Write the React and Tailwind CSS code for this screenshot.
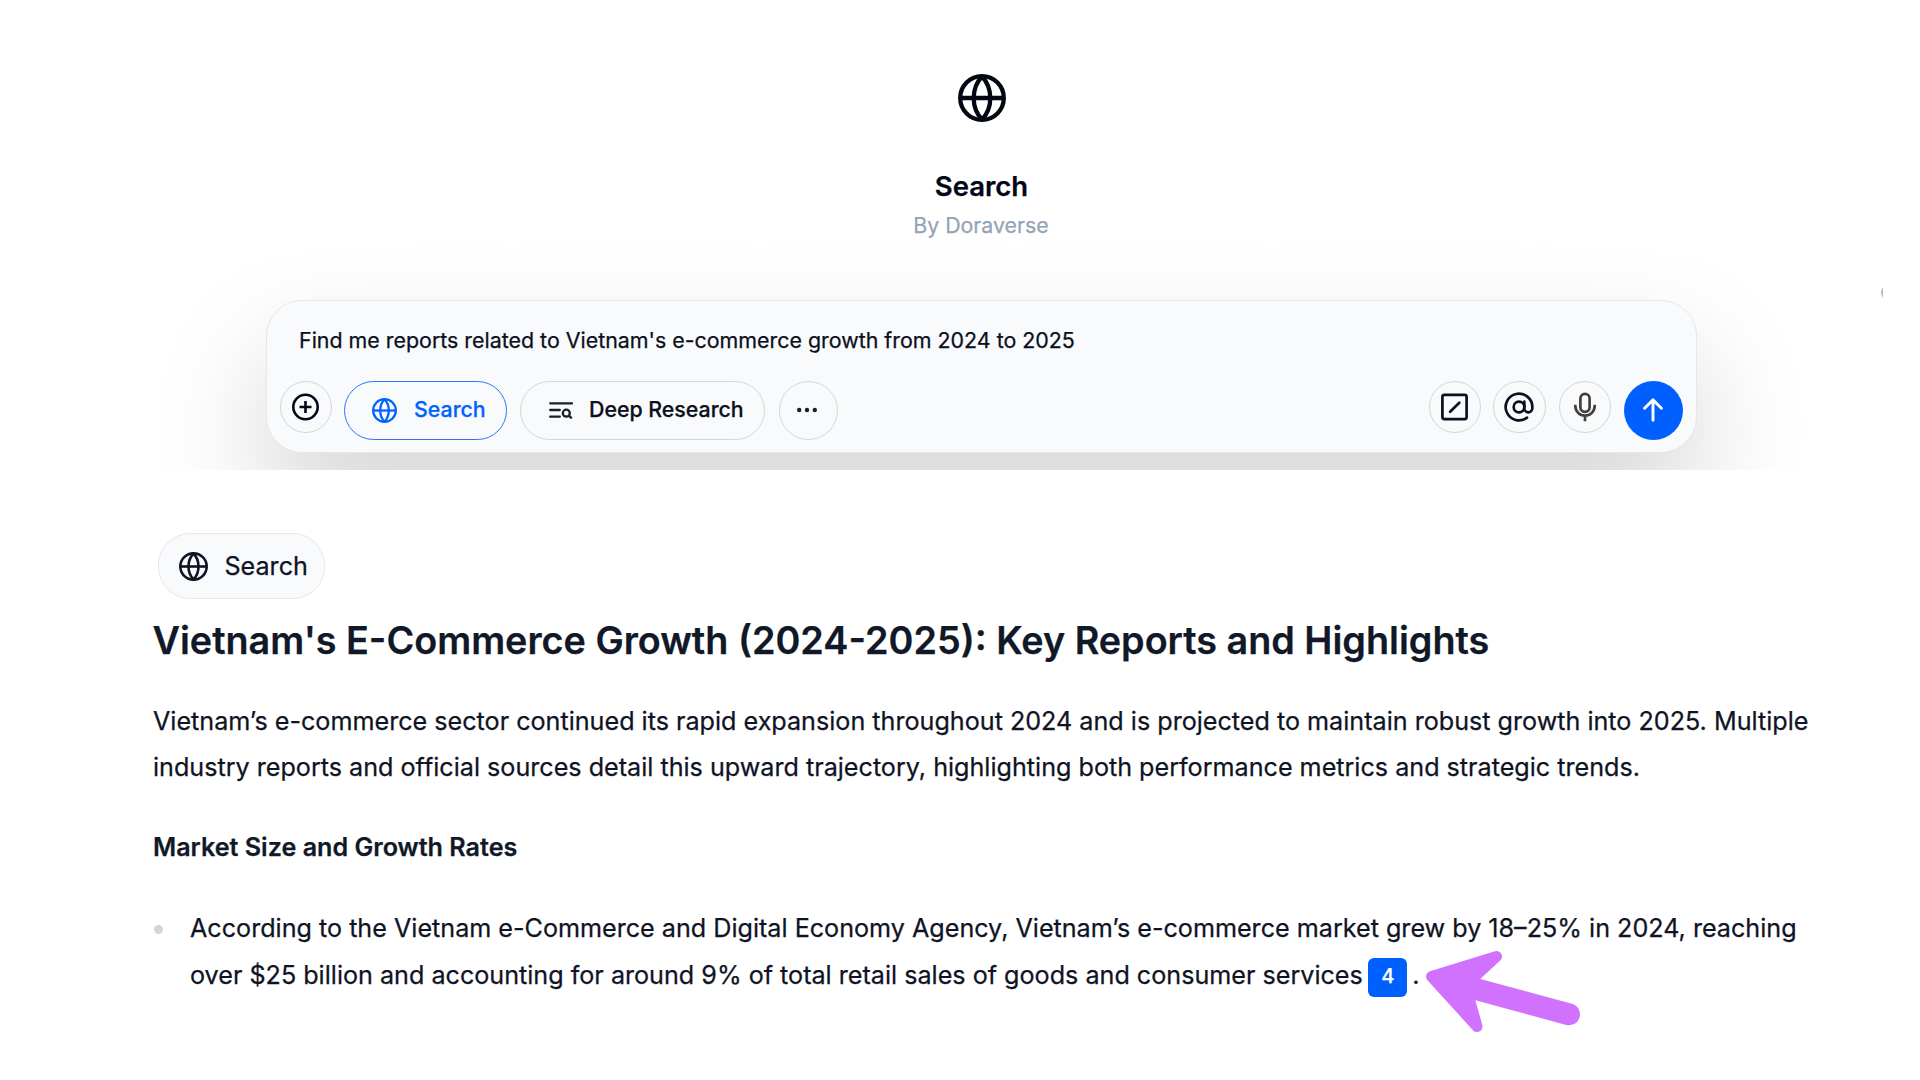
import React from "react";

function Globe({ className }) {
  return (
    <svg viewBox="0 0 48 48" className={className} fill="none" stroke="currentColor" strokeWidth="4.300" strokeLinejoin="round">
      <circle cx="24" cy="24" r="21.800" />
      <path d="M2.500 24h43" />
      <path d="M24 2.500c-5.200 5.500-8.300 13-8.300 21.500s3.100 16 8.300 21.500c5.200-5.500 8.300-13 8.300-21.500S29.200 8 24 2.500z" />
    </svg>
  );
}

function RoundButton({ children, className = "" }) {
  return (
    <button className={`flex size-[52.500px] shrink-0 items-center justify-center rounded-full border border-[#d6d6d6] ${className}`}>
      {children}
    </button>
  );
}

function PlusIcon() {
  return (
    <svg viewBox="0 0 28 28" className="size-7 text-[#020617]" fill="none" stroke="currentColor" strokeWidth="2.600">
      <circle cx="13.500" cy="14" r="12.200" />
      <path d="M13.500 8v12M7.500 14h12" />
    </svg>
  );
}

function ListSearchIcon() {
  return (
    <svg viewBox="0 0 24 18" className="h-[18px] w-6 text-[#1a1f2c]" fill="none" stroke="currentColor" strokeWidth="2.300">
      <path d="M1.200 2.300h21.800M1.200 9h9.600M1.200 15.700h9.600" strokeLinecap="round" />
      <circle cx="17.300" cy="12.200" r="3.500" />
      <path d="M19.800 14.700l3 2.700" />
    </svg>
  );
}

function DotsIcon() {
  return (
    <svg viewBox="0 0 24 8" className="-mt-px mr-[2px] h-2 w-6 text-[#1a1f2c]" fill="currentColor">
      <circle cx="4.200" cy="4" r="2.200" />
      <circle cx="12" cy="4" r="2.200" />
      <circle cx="19.800" cy="4" r="2.200" />
    </svg>
  );
}

function SlashSquareIcon() {
  return (
    <svg viewBox="0 0 28 28" className="size-7 text-[#0b1020]" fill="none" stroke="currentColor" strokeWidth="2.700" strokeLinecap="round">
      <rect x="1.400" y="1.900" width="24.200" height="24.200" rx="2" />
      <path d="M9.100 18.700l9.200-8.900" />
    </svg>
  );
}

function AtIcon() {
  return (
    <svg viewBox="0 0 24 24" className="size-8 text-[#0b1020]" fill="none" stroke="currentColor" strokeWidth="2" strokeLinecap="round" strokeLinejoin="round">
      <circle cx="12" cy="12" r="4" />
      <path d="M16 8v5a3 3 0 0 0 6 0v-1a10 10 0 1 0-4 8" />
    </svg>
  );
}

function MicIcon() {
  return (
    <svg viewBox="0 0 24 30" className="h-[30px] w-6 text-[#404040]" fill="none" stroke="currentColor" strokeWidth="2.700">
      <rect x="7.400" y="1.800" width="9.200" height="18" rx="4.600" />
      <path d="M2.300 12.800v1.200a9.700 9.700 0 0 0 19.400 0v-1.200M12 23.700v5.600" />
    </svg>
  );
}

function ArrowUpIcon() {
  return (
    <svg viewBox="0 0 22 24" className="mr-px h-6 w-[22px]" fill="none" stroke="#fff" strokeWidth="2.900" strokeLinecap="round" strokeLinejoin="round">
      <path d="M11 22.200V2M2.600 10.200L11 1.900l8.400 8.300" />
    </svg>
  );
}

function Pointer() {
  return (
    <svg viewBox="0 0 156 84" className="absolute top-[-1.700px] left-[1235px] h-[84px] w-[156px]" fill="none" stroke="#d172ff" strokeLinecap="round" strokeLinejoin="round">
      <path d="M6.500 26.500L71.500 6.500L45.800 30.300L41.800 40L52 76.500z" fill="#d172ff" strokeWidth="11" />
      <path d="M45 37.500L144 64.300" strokeWidth="22" />
    </svg>
  );
}

function Hero() {
  return (
    <section className="relative h-[470px] overflow-hidden pl-[266px]">
      <div className="flex w-[1431px] flex-col items-center pt-[74.400px]">
        <Globe className="size-12 text-[#030712]" />
        <h1 className="mt-[45.300px] text-[27.500px] leading-9 font-semibold text-[#020617]">Search</h1>
        <p className="mt-[7px] mr-px text-[21.330px] leading-7 text-[#94a3b8]">By Doraverse</p>
        <div className="mt-[61.500px] h-[153px] w-full rounded-[36px] border border-[#e5e7eb] bg-[#f9fafc] px-3 pt-[23px] shadow-[0_55px_115px_rgba(0,0,0,0.17)]">
          <p className="ml-5 text-[21.400px] leading-8 text-[#0b1020]">
            Find me reports related to Vietnam's e-commerce growth from 2024 to 2025
          </p>
          <div className="mt-[24.800px] flex items-start text-[21.330px] leading-8 font-medium">
            <RoundButton className="ml-[0.500px]">
              <PlusIcon />
            </RoundButton>
            <button className="ml-3 flex h-[59px] w-[162.500px] items-center rounded-full border-[1.500px] border-[#2b76ff] pl-[27px] text-[#0062ff]">
              <Globe className="mt-px size-[25px]" />
              <span className="-mt-[3px] ml-[17px]">Search</span>
            </button>
            <button className="ml-[13.500px] flex h-[59px] w-[245px] items-center rounded-full border border-[#d6d6d6] pl-[28px] text-[#0b1020]">
              <ListSearchIcon />
              <span className="-mt-[3px] ml-4">Deep Research</span>
            </button>
            <button className="ml-[13.500px] flex size-[59px] items-center justify-center rounded-full border border-[#d6d6d6]">
              <DotsIcon />
            </button>
            <RoundButton className="ml-auto">
              <SlashSquareIcon />
            </RoundButton>
            <RoundButton className="ml-3">
              <AtIcon />
            </RoundButton>
            <RoundButton className="ml-[13px]">
              <MicIcon />
            </RoundButton>
            <button className="mr-px ml-[13px] flex size-[59px] items-center justify-center rounded-full bg-[#005fff]">
              <ArrowUpIcon />
            </button>
          </div>
        </div>
      </div>
      <div className="absolute top-[284px] left-[1881px] h-[17px] w-0.5 overflow-hidden">
        <div className="size-[17px] rounded-full bg-[#bdbdbd]" />
      </div>
    </section>
  );
}

function Answer() {
  return (
    <article className="w-[1900px] pt-[63px] pl-[153px] whitespace-nowrap text-[#0f1424]">
      <div className="ml-[5px] flex h-[66px] w-[167px] items-center rounded-[32px] border border-[#e5e7eb] bg-[#f9fafc] pl-5">
        <Globe className="size-[29px]" />
        <span className="ml-[16.500px] text-[25.140px] leading-9">Search</span>
      </div>
      <h2 className="mt-[16.600px] -ml-[0.500px] text-[37.740px] leading-[48px] font-semibold text-[#111827]">
        Vietnam's E-Commerce Growth (2024-2025): Key Reports and Highlights
      </h2>
      <p className="mt-[34.400px] text-[25.150px] leading-[46px]">
        Vietnam’s e-commerce sector continued its rapid expansion throughout 2024 and is projected to maintain robust growth into 2025. Multiple
        <br />
        industry reports and official sources detail this upward trajectory, highlighting both performance metrics and strategic trends.
      </p>
      <h3 className="mt-[34.500px] text-[25.140px] leading-[46px] font-semibold text-[#111827]">Market Size and Growth Rates</h3>
      <ul className="mt-[34.500px] text-[25.150px]">
        <li className="flex">
          <span className="mt-[20px] mr-[27px] ml-px size-[9px] shrink-0 rounded-full bg-[#d1d5db]" />
          <div>
            <p className="leading-[46px]">
              According to the Vietnam e-Commerce and Digital Economy Agency, Vietnam’s e-commerce market grew by 18–25% in 2024, reaching
            </p>
            <div className="relative mt-px flex items-start leading-[46px]">
              <span>over $25 billion and accounting for around 9% of total retail sales of goods and consumer services</span>
              <span className="mt-[6px] ml-[5.500px] flex size-[39px] items-center justify-center rounded-[6px] bg-[#005fff] pb-[2px] text-[20px] leading-none font-medium text-white">
                4
              </span>
              <span className="ml-[5px]">.</span>
              <Pointer />
            </div>
          </div>
        </li>
      </ul>
    </article>
  );
}

export default function App() {
  return (
    <main className="h-[1080px] w-[1920px] overflow-hidden bg-white font-['Inter',sans-serif] [-webkit-text-stroke:0.250px]">
      <Hero />
      <Answer />
    </main>
  );
}
